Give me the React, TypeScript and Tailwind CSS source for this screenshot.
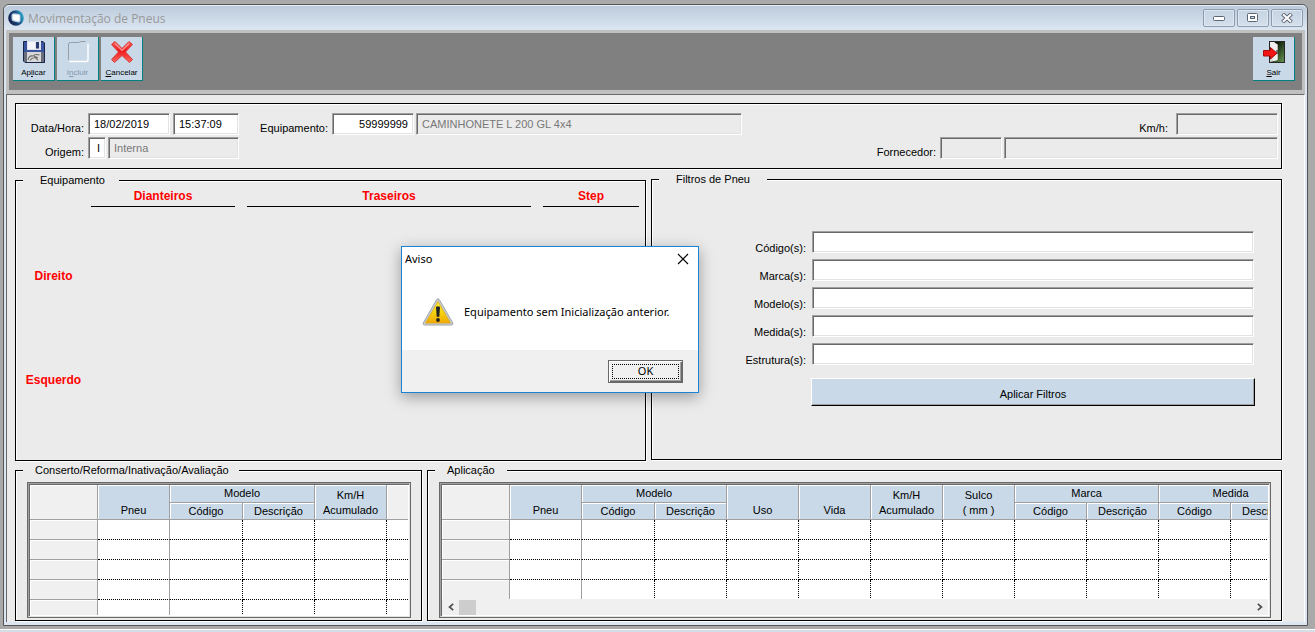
import React from "react";

const sunken =
  "min-w-0 h-[22px] rounded-none border border-t-[#a0a0a0] border-l-[#a0a0a0] border-b-white border-r-white shadow-[inset_1px_1px_0_#696969,inset_-1px_-1px_0_#e3e3e3] px-[5px] outline-none";
const box = "border border-black shadow-[1px_1px_0_#fff,inset_1px_1px_0_#fff]";

function AppLogo() {
  return (
    <svg width="16" height="16" viewBox="0 0 16 16" aria-hidden="true">
      <defs>
        <linearGradient id="ring" x1="0" y1="0.7" x2="1" y2="0.3">
          <stop offset="0" stopColor="#141d4a" />
          <stop offset="0.55" stopColor="#1d4a80" />
          <stop offset="1" stopColor="#2fb4cf" />
        </linearGradient>
      </defs>
      <circle cx="8" cy="8" r="7.8" fill="url(#ring)" />
      <path d="M3.500 5Q4 3.200 6 3.200L11 4Q12.500 4.500 12.500 6V10.500Q12.300 12.800 10.500 12.500L6 11.500Q3.800 11 3.500 9Z" fill="#b9d3e6" />
      <path d="M4.800 5.500Q5 4.400 6.500 4.500L10.500 5Q11.500 5.300 11.500 6.500V10Q11.300 11.300 10 11L6.500 10.200Q5 9.800 4.800 8.500Z" fill="#fff" />
    </svg>
  );
}

function SaveIcon() {
  return (
    <svg width="24" height="24" viewBox="0 0 24 24" aria-hidden="true">
      <path d="M1.500 1.500H21L22.500 3V22.500H3L1.500 21Z" fill="#3a55a0" stroke="#1a2547" />
      <path d="M2 12H22V22H3L2 21Z" fill="#6a6e7a" />
      <rect x="5" y="1" width="14" height="9" fill="#dde2ec" />
      <rect x="14" y="2" width="3" height="6.500" fill="#2b3a70" />
      <rect x="6" y="2" width="7" height="7" fill="#f3f5f9" />
      <rect x="5" y="12" width="14" height="10" fill="#d8d8d8" />
      <path d="M6 20Q7 15 11 16Q13 13.500 17.500 15M8 20.500Q10 17 14 18L16 20.500M12 16L16 18" fill="none" stroke="#6a6a6a" strokeWidth="1.100" />
    </svg>
  );
}

function FolderIcon() {
  return (
    <svg width="24" height="24" viewBox="0 0 24 24" aria-hidden="true">
      <path d="M22 3.500V19.500Q22 21.500 20 21.500H3.500" fill="none" stroke="#fff" strokeWidth="1.400" />
      <path d="M2.500 20V4Q2.500 2.500 4.500 2.500H12.500L15 1.500H19.500" fill="none" stroke="#989ea6" />
    </svg>
  );
}

function CancelIcon() {
  return (
    <svg width="24" height="24" viewBox="0 0 24 24" aria-hidden="true">
      <defs>
        <linearGradient id="red" x1="0" y1="0" x2="0" y2="1">
          <stop offset="0" stopColor="#ff5a5a" />
          <stop offset="0.450" stopColor="#f01818" />
          <stop offset="1" stopColor="#ff6a64" />
        </linearGradient>
      </defs>
      <path
        d="M5 1.500L12 8.500L19 1.500L22.500 4.500L15.500 12L22.500 19.500L19.500 22.500L12 15.500L4.500 22.500L1.500 19.500L8.500 12L1.500 4.500Z"
        fill="url(#red)"
        stroke="#d23c3c"
        strokeLinejoin="round"
      />
      <path d="M5 3.500L12 10.500L19 3.500" fill="none" stroke="#ff9a96" strokeWidth="1.200" />
    </svg>
  );
}

function ExitIcon() {
  return (
    <svg width="24" height="24" viewBox="0 0 24 24" aria-hidden="true">
      <defs>
        <linearGradient id="door" x1="0" y1="0" x2="1" y2="1">
          <stop offset="0.3" stopColor="#0c1a08" />
          <stop offset="1" stopColor="#6a9a54" />
        </linearGradient>
      </defs>
      <rect x="7.500" y="1.500" width="15" height="21" fill="url(#door)" stroke="#262626" />
      <path d="M8 2L15.500 4.500V20L8 22Z" fill="#dcdcdc" />
      <path d="M8 2H12L15.500 4.500V20L11 21Z" fill="#f0f0f0" />
      <path d="M15 10V14" stroke="#333" strokeWidth="1.200" />
      <path d="M1.500 10.500H8.500V7.500L15 13.200L8.500 19V16H1.500Z" fill="#f51414" stroke="#a80c0c" />
    </svg>
  );
}

function WarningIcon() {
  return (
    <svg width="32" height="30" viewBox="0 0 32 30" aria-hidden="true">
      <defs>
        <linearGradient id="warn" x1="0" y1="0" x2="0" y2="1">
          <stop offset="0" stopColor="#fff04a" />
          <stop offset="0.500" stopColor="#f6d410" />
          <stop offset="1" stopColor="#f2a808" />
        </linearGradient>
      </defs>
      <path d="M14.700 2.500Q16 .8 17.300 2.500L30.800 26Q31.300 28 29.500 28H2.500Q.7 28 1.200 26Z" fill="#c9ccd1" stroke="#a3a6ab" />
      <path d="M16 4.500L28.500 26H3.500Z" fill="url(#warn)" stroke="#dba80c" strokeWidth=".8" />
      <path d="M14 10Q16 8.300 18 10L17.300 19.800H14.700Z" fill="#222" />
      <circle cx="16" cy="23" r="1.900" fill="#222" />
    </svg>
  );
}

function ToolButton({
  icon,
  before = "",
  mnemonic,
  after,
  disabled = false,
}: {
  icon: React.ReactNode;
  before?: string;
  mnemonic: string;
  after: string;
  disabled?: boolean;
}) {
  return (
    <button
      type="button"
      disabled={disabled}
      className="flex h-11 w-[42px] flex-col items-center border-r border-b border-[#008080] bg-[#c9d9e8] pt-[3px] text-[8px] leading-[10px] text-black disabled:text-[#8296ac]"
    >
      {icon}
      <span className="mt-1">
        {before}
        <u>{mnemonic}</u>
        {after}
      </span>
    </button>
  );
}

function WindowButton({ label, children }: { label: string; children: React.ReactNode }) {
  return (
    <button
      type="button"
      aria-label={label}
      className="flex h-[18px] w-8 items-center justify-center rounded-[2px] border border-[#8e9bac] bg-gradient-to-b from-[#c6d3e1] to-[#d3dfeb] shadow-[inset_0_0_0_1px_#dfe8f2]"
    >
      {children}
    </button>
  );
}

function Group({
  title,
  legendClass,
  className = "",
  children,
}: {
  title: string;
  legendClass: string;
  className?: string;
  children: React.ReactNode;
}) {
  return (
    <fieldset className={`min-w-0 ${box} ${className}`}>
      <legend className={`mb-[2px] ml-[7px] h-3 bg-[#ebebeb] leading-[13px] whitespace-nowrap ${legendClass}`}>{title}</legend>
      {children}
    </fieldset>
  );
}

type Column = { title: string; sub?: string[] };

const headCell =
  "border-r border-b border-[#a0a0a0] bg-[#c9d9e8] p-0 text-center font-normal shadow-[inset_1px_1px_0_#fff] whitespace-pre-line";
const blankHead = "border-r border-b border-[#a0a0a0] bg-[#f0f0f0] p-0 shadow-[inset_1px_1px_0_#fff]";

function DataGrid({
  label,
  columns,
  rows,
  tableClass,
  filler = false,
  scrollbar = false,
}: {
  label: string;
  columns: Column[];
  rows: number;
  tableClass: string;
  filler?: boolean;
  scrollbar?: boolean;
}) {
  const leaves = columns.flatMap((c) => c.sub ?? [c.title]);
  return (
    <div className="h-[136px] border border-[#696969]">
      <div className="flex h-full flex-col border border-t-[#a0a0a0] border-l-[#a0a0a0] border-r-[#e3e3e3] border-b-[#e3e3e3]">
        <div className="flex min-h-0 flex-1 flex-col border-t border-l border-[#696969] bg-white pr-px pb-px">
          <div className="min-h-0 flex-1 overflow-hidden">
            <table aria-label={label} className={`table-fixed border-separate border-spacing-0 ${tableClass}`}>
              <colgroup>
                <col className="w-[68px]" />
                {leaves.map((_, i) => (
                  <col key={i} className={i === 1 ? "w-[73px]" : "w-[72px]"} />
                ))}
                {filler && <col />}
              </colgroup>
              <thead>
                <tr className="h-[18px]">
                  <td rowSpan={2} className={blankHead} />
                  {columns.map((c) =>
                    c.sub ? (
                      <th key={c.title} colSpan={2} className={`h-[18px] align-top leading-4 ${headCell}`}>
                        {c.title}
                      </th>
                    ) : (
                      <th key={c.title} rowSpan={2} className={`pb-px align-bottom leading-[15px] ${headCell}`}>
                        {c.title}
                      </th>
                    ),
                  )}
                  {filler && <td rowSpan={2} className="border-b border-[#a0a0a0] bg-[#f0f0f0] p-0 shadow-[inset_1px_1px_0_#fff]" />}
                </tr>
                <tr className="h-[17px]">
                  {columns.flatMap((c) =>
                    (c.sub ?? []).map((s) => (
                      <th key={c.title + s} className={`h-[17px] leading-4 ${headCell}`}>
                        {s}
                      </th>
                    )),
                  )}
                </tr>
              </thead>
              <tbody>
                {Array.from({ length: rows }, (_, r) => (
                  <tr key={r} className="h-5">
                    <td className={blankHead} />
                    {leaves.map((_, i) => (
                      <td
                        key={i}
                        className={
                          i === 0
                            ? "border-r border-b border-r-[#a0a0a0] border-b-black p-0 [border-bottom-style:dotted]"
                            : "border-r border-b border-dotted border-black p-0"
                        }
                      />
                    ))}
                    {filler && <td className="border-b border-dotted border-black p-0" />}
                  </tr>
                ))}
              </tbody>
            </table>
          </div>
          {scrollbar && (
            <div className="flex h-4 items-center bg-[#f0f0f0]">
              <button type="button" aria-label="Rolar para a esquerda" className="flex h-4 w-[17px] items-center justify-center">
                <svg width="8" height="8" viewBox="0 0 8 8">
                  <path d="M6.200 .8L2.500 4L6.200 7.200" fill="none" stroke="#505050" strokeWidth="1.700" />
                </svg>
              </button>
              <div className="h-[15px] w-[17px] bg-[#cdcdcd]" />
              <div className="flex-1" />
              <button type="button" aria-label="Rolar para a direita" className="flex h-4 w-[17px] items-center justify-center">
                <svg width="8" height="8" viewBox="0 0 8 8">
                  <path d="M1.800 .8L5.500 4L1.800 7.200" fill="none" stroke="#505050" strokeWidth="1.700" />
                </svg>
              </button>
            </div>
          )}
        </div>
      </div>
    </div>
  );
}

const repairColumns: Column[] = [
  { title: "Pneu" },
  { title: "Modelo", sub: ["Código", "Descrição"] },
  { title: "Km/H\nAcumulado" },
];

const applyColumns: Column[] = [
  { title: "Pneu" },
  { title: "Modelo", sub: ["Código", "Descrição"] },
  { title: "Uso" },
  { title: "Vida" },
  { title: "Km/H\nAcumulado" },
  { title: "Sulco\n( mm )" },
  { title: "Marca", sub: ["Código", "Descrição"] },
  { title: "Medida", sub: ["Código", "Descrição"] },
];

const filters = ["Código(s):", "Marca(s):", "Modelo(s):", "Medida(s):", "Estrutura(s):"];

function Dialog() {
  return (
    <div
      role="alertdialog"
      aria-labelledby="dlg-title"
      aria-describedby="dlg-text"
      className="absolute top-[246px] left-[401px] w-[298px] border border-[#1883d7] bg-white font-['Noto_Sans','Open_Sans',sans-serif] text-[11px] text-black shadow-[0_4px_14px_rgba(0,0,0,0.35)]"
    >
      <div className="flex h-6 items-center justify-between pr-[9px] pl-[3px]">
        <h2 id="dlg-title">Aviso</h2>
        <button type="button" aria-label="Fechar" className="flex size-3 items-center justify-center">
          <svg width="12" height="12" viewBox="0 0 12 12">
            <path d="M1 1L11 11M11 1L1 11" stroke="#000" strokeWidth="1.100" />
          </svg>
        </button>
      </div>
      <div className="flex h-[79px] items-center gap-[10px] pt-[3px] pl-5">
        <WarningIcon />
        <p id="dlg-text" className="whitespace-nowrap">
          Equipamento sem Inicialização anterior.
        </p>
      </div>
      <div className="flex h-[42px] items-center justify-end bg-[#f0f0f0] pr-[15px]">
        <button
          type="button"
          className="h-[23px] w-[75px] border border-[#696969] bg-[#f0f0f0] p-[3px] shadow-[inset_1px_1px_0_#fff,inset_-1px_-1px_0_#696969,inset_-2px_-2px_0_#a0a0a0]"
        >
          <span className="flex h-full items-center justify-center border border-dotted border-black">OK</span>
        </button>
      </div>
    </div>
  );
}

export default function App() {
  return (
    <div className="relative min-h-screen bg-[#a9a9a9] pt-1 pl-[3px] font-['Liberation_Sans',Arial,sans-serif] text-[11px] text-black">
      <main className="mr-[7px] rounded-t-md border border-[#555] bg-[#dbe6f2] px-[2px] pb-[3px]">
        <header className="-mx-[2px] flex h-[25px] items-center rounded-t-md border-t border-[#e6edf5] bg-gradient-to-b from-[#bccbdb] to-[#dbe6f2] pr-1 pl-1">
          <AppLogo />
          <h1 className="ml-1 flex-1 pt-px font-['Open_Sans','Noto_Sans',sans-serif] text-xs text-[#999]">Movimentação de Pneus</h1>
          <div className="flex gap-[2px]">
            <WindowButton label="Minimizar">
              <svg width="12" height="6" viewBox="0 0 12 6">
                <rect x=".5" y="1.500" width="11" height="4" rx="1" fill="#fff" stroke="#5d6673" />
              </svg>
            </WindowButton>
            <WindowButton label="Restaurar">
              <svg width="12" height="10" viewBox="0 0 12 10">
                <rect x=".5" y=".5" width="10" height="8" rx="1" fill="#fff" stroke="#5d6673" />
                <rect x="3.500" y="3.500" width="4" height="2" fill="#c6d3e1" stroke="#5d6673" />
              </svg>
            </WindowButton>
            <WindowButton label="Fechar janela">
              <svg width="12" height="10" viewBox="0 0 12 10">
                <path d="M1.500 .8L10.500 9.200M10.500 .8L1.500 9.200" stroke="#5d6673" strokeWidth="4" />
                <path d="M2 1.300L10 8.700M10 1.300L2 8.700" stroke="#fff" strokeWidth="2" />
              </svg>
            </WindowButton>
          </div>
        </header>

        <nav aria-label="Ferramentas" className="border-[3px] border-b-4 border-[#c0c0c0] bg-[#808080]">
          <div className="flex items-start gap-[2px] pt-1 pr-[7px] pb-[9px] pl-1">
            <ToolButton icon={<SaveIcon />} before="Ap" mnemonic="l" after="icar" />
            <ToolButton icon={<FolderIcon />} before="I" mnemonic="n" after="cluir" disabled />
            <ToolButton icon={<CancelIcon />} mnemonic="C" after="ancelar" />
            <div className="flex-1" />
            <ToolButton icon={<ExitIcon />} mnemonic="S" after="air" />
          </div>
        </nav>

        <div className="border-t border-l border-[#696969] border-r border-r-white bg-[#ebebeb] pt-2 pr-[22px] pb-px pl-2">
          <section aria-label="Dados" className={`flex flex-col gap-[2px] py-[9px] pr-[3px] ${box}`}>
            <div className="flex items-end">
              <label htmlFor="data" className="w-[68px] text-right leading-[14px]">Data/Hora:</label>
              <input id="data" defaultValue="18/02/2019" className={`ml-1 w-[82px] bg-white ${sunken}`} />
              <input aria-label="Hora" defaultValue="15:37:09" className={`ml-[3px] w-[66px] bg-white ${sunken}`} />
              <label htmlFor="equip" className="w-[89px] text-right leading-[14px]">Equipamento:</label>
              <input id="equip" defaultValue="59999999" className={`ml-1 w-[82px] bg-white text-right ${sunken}`} />
              <input
                aria-label="Descrição do equipamento"
                readOnly
                value="CAMINHONETE L 200 GL 4x4"
                className={`ml-[2px] w-[326px] text-[#787878] ${sunken}`}
              />
              <label htmlFor="kmh" className="flex-1 text-right leading-[14px]">Km/h:</label>
              <input id="kmh" readOnly className={`ml-2 w-[102px] ${sunken}`} />
            </div>
            <div className="flex items-end">
              <label htmlFor="origem" className="w-[68px] text-right leading-[14px]">Origem:</label>
              <input id="origem" defaultValue="I" className={`ml-1 w-[18px] bg-white text-right ${sunken}`} />
              <input aria-label="Descrição da origem" readOnly value="Interna" className={`ml-[2px] w-[131px] text-[#787878] ${sunken}`} />
              <label htmlFor="forn" className="flex-1 text-right leading-[14px]">Fornecedor:</label>
              <input id="forn" readOnly className={`ml-1 w-[62px] ${sunken}`} />
              <input aria-label="Nome do fornecedor" readOnly className={`ml-[2px] w-[274px] ${sunken}`} />
            </div>
          </section>

          <div className="mt-1 grid grid-cols-2 gap-[5px]">
            <Group title="Equipamento" legendClass="w-24 pl-[17px]" className="mt-px min-h-[287px]">
              <div className="grid grid-cols-[63px_144fr_284fr_96fr] gap-x-3 pr-[6px] text-center text-xs font-bold text-[#f00]">
                <span />
                <h3 className="border-b border-black pb-[2px] leading-4">Dianteiros</h3>
                <h3 className="border-b border-black pb-[2px] leading-4">Traseiros</h3>
                <h3 className="border-b border-black pb-[2px] leading-4">Step</h3>
              </div>
              <div className="grid w-[75px] auto-rows-[104px] items-center pt-[17px] text-center text-xs font-bold text-[#f00]">
                <h3>Direito</h3>
                <h3>Esquerdo</h3>
              </div>
            </Group>

            <Group title="Filtros de Pneu" legendClass="w-[108px] pl-[17px]" className="mb-px">
              <form className="flex flex-col gap-[6px] pt-11 pr-[27px]" onSubmit={(e) => e.preventDefault()}>
                {filters.map((f, i) => (
                  <div key={f} className="flex items-end">
                    <label htmlFor={`filtro-${i}`} className="w-[154px] text-right leading-[10px]">{f}</label>
                    <input id={`filtro-${i}`} className={`ml-[6px] flex-1 bg-white ${sunken}`} />
                  </div>
                ))}
                <button
                  type="submit"
                  className="mt-[7px] -mr-px ml-[159px] h-7 border border-t-white border-r-black border-b-black border-l-white bg-[#c9d9e8] pt-1 shadow-[inset_-1px_-1px_0_#a0a0a0]"
                >
                  Aplicar Filtros
                </button>
              </form>
            </Group>
          </div>

          <div className="mt-[3px] grid grid-cols-[407px_minmax(0,1fr)] gap-[5px]">
            <Group title="Conserto/Reforma/Inativação/Avaliação" legendClass="w-[216px] pl-3">
              <div className="pt-1 pr-[10px] pb-[2px] pl-[11px]">
                <DataGrid label="Conserto/Reforma/Inativação/Avaliação" columns={repairColumns} rows={5} tableClass="w-full" filler />
              </div>
            </Group>
            <Group title="Aplicação" legendClass="w-[72px] pl-3">
              <div className="pt-1 pr-[10px] pb-[2px] pl-[11px]">
                <DataGrid label="Aplicação" columns={applyColumns} rows={4} tableClass="w-[861px]" scrollbar />
              </div>
            </Group>
          </div>
        </div>
      </main>
      <div className="mt-[3px] -ml-[3px] h-[3px] border-t border-white bg-[#d5dde6]" />
      <Dialog />
    </div>
  );
}
